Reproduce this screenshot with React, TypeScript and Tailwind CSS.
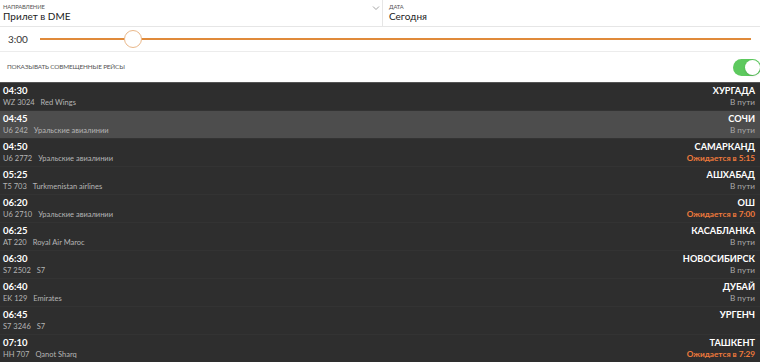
import React from "react";

type Flight = { time: string; num: string; airline: string; city: string; status?: string; late?: boolean; hl?: boolean };

const flights: Flight[] = [
  { time: "04:30", num: "WZ 3024", airline: "Red Wings", city: "ХУРГАДА", status: "В пути" },
  { time: "04:45", num: "U6 242", airline: "Уральские авиалинии", city: "СОЧИ", status: "В пути", hl: true },
  { time: "04:50", num: "U6 2772", airline: "Уральские авиалинии", city: "САМАРКАНД", status: "Ожидается в 5:15", late: true },
  { time: "05:25", num: "T5 703", airline: "Turkmenistan airlines", city: "АШХАБАД", status: "В пути" },
  { time: "06:20", num: "U6 2710", airline: "Уральские авиалинии", city: "ОШ", status: "Ожидается в 7:00", late: true },
  { time: "06:25", num: "AT 220", airline: "Royal Air Maroc", city: "КАСАБЛАНКА", status: "В пути" },
  { time: "06:30", num: "S7 2502", airline: "S7", city: "НОВОСИБИРСК", status: "В пути" },
  { time: "06:40", num: "EK 129", airline: "Emirates", city: "ДУБАЙ", status: "В пути" },
  { time: "06:45", num: "S7 3246", airline: "S7", city: "УРГЕНЧ" },
  { time: "07:10", num: "HH 707", airline: "Qanot Sharq", city: "ТАШКЕНТ", status: "Ожидается в 7:29", late: true },
];

export default function App() {
  return (
    <div className="w-[760px] h-[362px] overflow-hidden bg-white" style={{ fontFamily: "Lato, 'Open Sans', sans-serif" }}>
      <div className="flex h-[27px] border-b border-[#e6e6e6]">
        <div className="relative w-[383px] border-r border-[#e6e6e6] pl-[3px] pt-[3px]">
          <div className="text-[5.8px] leading-[7px] text-[#555] tracking-tight">НАПРАВЛЕНИЕ</div>
          <div className="text-[10px] leading-[13px] text-[#222]">Прилет в DME</div>
          <svg className="absolute right-[2px] top-[5px]" width="8" height="6" viewBox="0 0 8 6">
            <path d="M1 1.5 L4 4.5 L7 1.5" fill="none" stroke="#999" strokeWidth="0.9" />
          </svg>
        </div>
        <div className="relative flex-1 pl-[6px] pt-[3px]">
          <div className="text-[5.8px] leading-[7px] text-[#555] tracking-tight">ДАТА</div>
          <div className="text-[10px] leading-[13px] text-[#222]">Сегодня</div>
        </div>
      </div>
      <div className="flex items-center h-[25px] border-b border-[#ececec]">
        <div className="w-[40px] pl-[8px] text-[10px] text-[#333]">3:00</div>
        <div className="relative flex-1 mr-[9px] h-[20px] flex items-center">
          <div className="h-[2px] w-full bg-[#e08a3a]" />
          <div className="absolute left-[84px] top-[1px] w-[18px] h-[18px] rounded-full bg-white border border-[#eab88a]" />
        </div>
      </div>
      <div className="flex items-center justify-between h-[30px] pl-[7px] pr-0">
        <div className="text-[6.4px] text-[#555] tracking-tight">ПОКАЗЫВАТЬ СОВМЕЩЕННЫЕ РЕЙСЫ</div>
        <div className="relative w-[28px] h-[17px] rounded-full bg-[#5dc95e] mr-[-1px]">
          <div className="absolute right-[1px] top-[1px] w-[15px] h-[15px] rounded-full bg-white shadow" />
        </div>
      </div>
      <div className="bg-[#2e2e2e] border-t border-[#555]">
        {flights.map((f, i) => (
          <div key={i} className={`flex justify-between h-[28px] px-[3px] pt-[2px] border-b border-[#333] ${f.hl ? "bg-[#4d4d4d]" : "bg-[#2e2e2e]"}`}>
            <div>
              <div className="text-[9.5px] leading-[12px] font-bold text-white">{f.time}</div>
              <div className="text-[7.5px] leading-[11px] text-[#b5b5b5]">
                {f.num}<span className="ml-[6px]">{f.airline}</span>
              </div>
            </div>
            <div className="text-right pr-[2px]">
              <div className="text-[9.2px] leading-[12px] font-bold text-white">{f.city}</div>
              {f.status && (
                <div className={`text-[8.2px] leading-[11px] ${f.late ? "text-[#ee7a3c] font-bold" : "text-[#a8a8a8]"}`}>{f.status}</div>
              )}
            </div>
          </div>
        ))}
      </div>
    </div>
  );
}
